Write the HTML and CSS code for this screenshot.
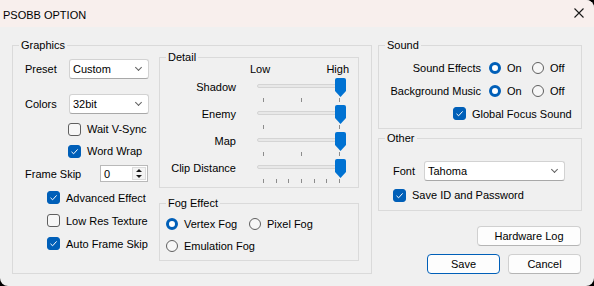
FILE: index.html
```html
<!DOCTYPE html>
<html lang="en">
<head>
    <meta charset="UTF-8">
    <title>PSOBB OPTION</title>
    <link rel="stylesheet" href="styles.css">
</head>
<body>
    <div class="window">
        <div class="titlebar">
            <span class="title">PSOBB OPTION</span>
            <svg class="close" width="10" height="10" viewBox="0 0 10 10">
                <path d="M0.5 0.5 L9.5 9.5 M9.5 0.5 L0.5 9.5" stroke="#1a1a1a" stroke-width="1.1" fill="none"/>
            </svg>
        </div>

        <div class="content">
            <!-- 左侧: 图形设置 -->
            <div class="group graphics">
                <span class="legend">Graphics</span>
                <div class="gfx-left">
                    <div class="field">
                        <span class="field-label">Preset</span>
                        <div class="combo small">Custom<span class="chevron"></span></div>
                    </div>
                    <div class="field colors-row">
                        <span class="field-label">Colors</span>
                        <div class="combo small">32bit<span class="chevron"></span></div>
                    </div>
                    <div class="check-row wide first">
                        <span class="check"></span>Wait V-Sync
                    </div>
                    <div class="check-row wide">
                        <span class="check on"></span>Word Wrap
                    </div>
                    <div class="field skip-row">
                        <span class="field-label skip-label">Frame Skip</span>
                        <div class="spin">
                            <span>0</span>
                            <span class="spin-btns">
                                <span class="arrow up"></span>
                                <span class="arrow down"></span>
                            </span>
                        </div>
                    </div>
                    <div class="check-row narrow first">
                        <span class="check on"></span>Advanced Effect
                    </div>
                    <div class="check-row narrow">
                        <span class="check"></span>Low Res Texture
                    </div>
                    <div class="check-row narrow">
                        <span class="check on"></span>Auto Frame Skip
                    </div>
                </div>

                <div class="gfx-right">
                    <div class="group detail">
                        <span class="legend">Detail</span>
                        <div class="scale-head"><span>Low</span><span>High</span></div>
                        <div class="slider-row first">
                            <span class="slider-label">Shadow</span>
                            <div class="slider">
                                <div class="track"></div>
                                <div class="ticks"><i></i><i></i><i></i></div>
                                <span class="thumb"></span>
                            </div>
                        </div>
                        <div class="slider-row">
                            <span class="slider-label">Enemy</span>
                            <div class="slider">
                                <div class="track"></div>
                                <div class="ticks"><i></i><i></i></div>
                                <span class="thumb"></span>
                            </div>
                        </div>
                        <div class="slider-row">
                            <span class="slider-label">Map</span>
                            <div class="slider">
                                <div class="track"></div>
                                <div class="ticks"><i></i><i></i><i></i></div>
                                <span class="thumb"></span>
                            </div>
                        </div>
                        <div class="slider-row">
                            <span class="slider-label">Clip Distance</span>
                            <div class="slider">
                                <div class="track"></div>
                                <div class="ticks"><i></i><i></i><i></i><i></i><i></i><i></i><i></i></div>
                                <span class="thumb"></span>
                            </div>
                        </div>
                    </div>

                    <div class="group fog">
                        <span class="legend">Fog Effect</span>
                        <div class="fog-grid">
                            <div class="opt"><span class="radio on"></span>Vertex Fog</div>
                            <div class="opt"><span class="radio"></span>Pixel Fog</div>
                            <div class="opt wide-opt"><span class="radio"></span>Emulation Fog</div>
                        </div>
                    </div>
                </div>
            </div>

            <!-- 右侧: 声音/其他/按钮 -->
            <div class="side">
                <div class="group sound">
                    <span class="legend">Sound</span>
                    <div class="sound-grid">
                        <span class="sound-label">Sound Effects</span>
                        <div class="opt"><span class="radio on"></span>On</div>
                        <div class="opt"><span class="radio"></span>Off</div>
                        <span class="sound-label">Background Music</span>
                        <div class="opt"><span class="radio on"></span>On</div>
                        <div class="opt"><span class="radio"></span>Off</div>
                    </div>
                    <div class="check-row focus-row">
                        <span class="check on"></span>Global Focus Sound
                    </div>
                </div>

                <div class="group other">
                    <span class="legend">Other</span>
                    <div class="field">
                        <span class="field-label font-label">Font</span>
                        <div class="combo long">Tahoma<span class="chevron"></span></div>
                    </div>
                    <div class="check-row save-row">
                        <span class="check on"></span>Save ID and Password
                    </div>
                </div>

                <div class="actions">
                    <button class="btn hw">Hardware Log</button>
                    <div class="btn-row">
                        <button class="btn default">Save</button>
                        <button class="btn">Cancel</button>
                    </div>
                </div>
            </div>
        </div>
    </div>
</body>
</html>
```

FILE: styles.css
```css
:root {
    --face: #f0f0f0;
    --line: #dadada;
    --accent: #005fb8;
    --thumb: #0072d2;
    --text: #000;
}

* {
    box-sizing: border-box;
}

body {
    margin: 0;
    background: #000;
    font-family: 'Liberation Sans', Arial, sans-serif;
    font-size: 11px;
    color: var(--text);
}

.window {
    width: 594px;
    height: 286px;
    background: var(--face);
    border-radius: 0 8px 8px 8px;
    overflow: hidden;
}

.titlebar {
    height: 27px;
    background: #f8efed;
    display: flex;
    align-items: center;
    justify-content: space-between;
    padding: 2px 10px 0 3px;
}

.close {
    display: block;
    margin-top: -3px;
}

.content {
    display: flex;
    gap: 6px;
    padding: 18px 0 0 12px;
}

.group {
    position: relative;
    border: 1px solid var(--line);
}

.legend {
    position: absolute;
    top: -8px;
    left: 6px;
    padding: 0 2px;
    line-height: 15px;
    background: var(--face);
    white-space: nowrap;
}

/* Graphics */
.graphics {
    width: 360px;
    height: 229px;
    display: flex;
}

.gfx-left {
    width: 146px;
    padding: 13px 0 0 12px;
    display: flex;
    flex-direction: column;
}

.field {
    display: flex;
    align-items: center;
}

.field-label {
    width: 44px;
}

.colors-row {
    margin-top: 15px;
}

.combo {
    position: relative;
    height: 20px;
    line-height: 18px;
    padding-left: 3px;
    background: #fff;
    border: 1px solid #d2d2d2;
    border-bottom-color: #a8a8a8;
    border-radius: 3px;
}

.combo.small {
    width: 80px;
}

.combo.long {
    width: 141px;
}

.chevron {
    position: absolute;
    right: 7px;
    top: 5px;
    width: 5px;
    height: 5px;
    border-right: 1px solid #606060;
    border-bottom: 1px solid #606060;
    transform: rotate(45deg);
}

.check-row {
    display: flex;
    align-items: center;
    gap: 6px;
    height: 22px;
    white-space: nowrap;
}

.check-row.wide {
    padding-left: 43px;
}

.check-row.wide.first {
    margin-top: 4px;
}

.check-row.narrow {
    padding-left: 22px;
    height: 23px;
}

.check-row.narrow.first {
    margin-top: 4px;
}

.check {
    flex: none;
    width: 13px;
    height: 13px;
    border: 1px solid #5f5f5f;
    border-radius: 3px;
    background: #f7f7f7;
}

.check.on {
    border-color: var(--accent);
    background: var(--accent) url("data:image/svg+xml;utf8,<svg xmlns='http://www.w3.org/2000/svg' width='11' height='11'><path d='M2.5 5.8 L4.6 7.8 L8.6 3.4' stroke='white' stroke-width='1' fill='none'/></svg>") center / 11px 11px no-repeat;
}

.radio {
    flex: none;
    width: 12px;
    height: 12px;
    border: 1px solid #5f5f5f;
    border-radius: 50%;
    background: #f7f7f7;
}

.radio.on {
    border: 3.5px solid var(--accent);
    background: #fff;
}

.skip-row {
    margin-top: 3px;
}

.skip-label {
    width: 75px;
}

.spin {
    width: 48px;
    height: 17px;
    display: flex;
    justify-content: space-between;
    align-items: center;
    padding: 0 1px 0 3px;
    background: #fff;
    border: 1px solid #b9b9b9;
}

.spin-btns {
    display: flex;
    flex-direction: column;
    justify-content: space-around;
    align-items: center;
    width: 14px;
    height: 13px;
    border: 1px solid #dcdcdc;
    background: #f4f4f4;
}

.arrow {
    width: 0;
    height: 0;
    border-left: 3px solid transparent;
    border-right: 3px solid transparent;
}

.arrow.up {
    border-bottom: 3px solid #1a1a1a;
}

.arrow.down {
    border-top: 3px solid #1a1a1a;
}

.gfx-right {
    width: 200px;
    padding-top: 11px;
}

/* Detail */
.detail {
    height: 131px;
}

.scale-head {
    display: flex;
    justify-content: space-between;
    margin: 4px 9px 0 90px;
    line-height: 14px;
}

.slider-row {
    display: grid;
    grid-template-columns: 76px 89px;
    column-gap: 21px;
    height: 27px;
}

.slider-row.first {
    margin-top: 2px;
}

.slider-label {
    text-align: right;
    line-height: 19px;
    white-space: nowrap;
}

.slider {
    position: relative;
    height: 27px;
}

.track {
    margin-top: 6px;
    height: 4px;
    background: #e8e8e8;
    border: 1px solid #d4d4d4;
    border-radius: 2px;
}

.ticks {
    display: flex;
    justify-content: space-between;
    margin: 10px 6px 0;
    height: 4px;
}

.ticks i {
    width: 1px;
    background: #8c8c8c;
}

.thumb {
    position: absolute;
    top: 0;
    right: 0;
    width: 11px;
    height: 19px;
    background: var(--thumb);
    border-radius: 2px 2px 0 0;
    clip-path: polygon(0 0, 100% 0, 100% 68%, 50% 100%, 0 68%);
}

/* Fog */
.fog {
    margin-top: 15px;
    height: 58px;
}

.fog-grid {
    display: grid;
    grid-template-columns: 83px auto;
    grid-auto-rows: 22px;
    padding: 9px 0 0 6px;
}

.opt {
    display: flex;
    align-items: center;
    gap: 6px;
    white-space: nowrap;
}

.wide-opt {
    grid-column: 1 / 3;
}

/* Sound / Other */
.side {
    width: 204px;
}

.sound {
    height: 84px;
    padding-top: 10px;
}

.sound-grid {
    display: grid;
    grid-template-columns: 110px 43px auto;
    grid-auto-rows: 23px;
}

.sound-label {
    align-self: center;
    text-align: right;
    padding-right: 8px;
    white-space: nowrap;
}

.focus-row {
    height: 23px;
    padding-left: 74px;
}

.other {
    margin-top: 9px;
    height: 73px;
    padding: 22px 0 0 14px;
}

.font-label {
    width: 31px;
}

.save-row {
    margin-top: 3px;
}

.actions {
    display: flex;
    flex-direction: column;
    align-items: flex-end;
    margin-top: 15px;
    padding-right: 1px;
}

.btn-row {
    display: flex;
    gap: 8px;
    margin-top: 8px;
}

.btn {
    height: 20px;
    width: 73px;
    padding: 0;
    font-family: inherit;
    font-size: 11px;
    color: var(--text);
    background: #fdfdfd;
    border: 1px solid #d0d0d0;
    border-bottom-color: #b5b5b5;
    border-radius: 4px;
}

.btn.hw {
    width: 104px;
}

.btn.default {
    border: 1px solid var(--accent);
}
```
